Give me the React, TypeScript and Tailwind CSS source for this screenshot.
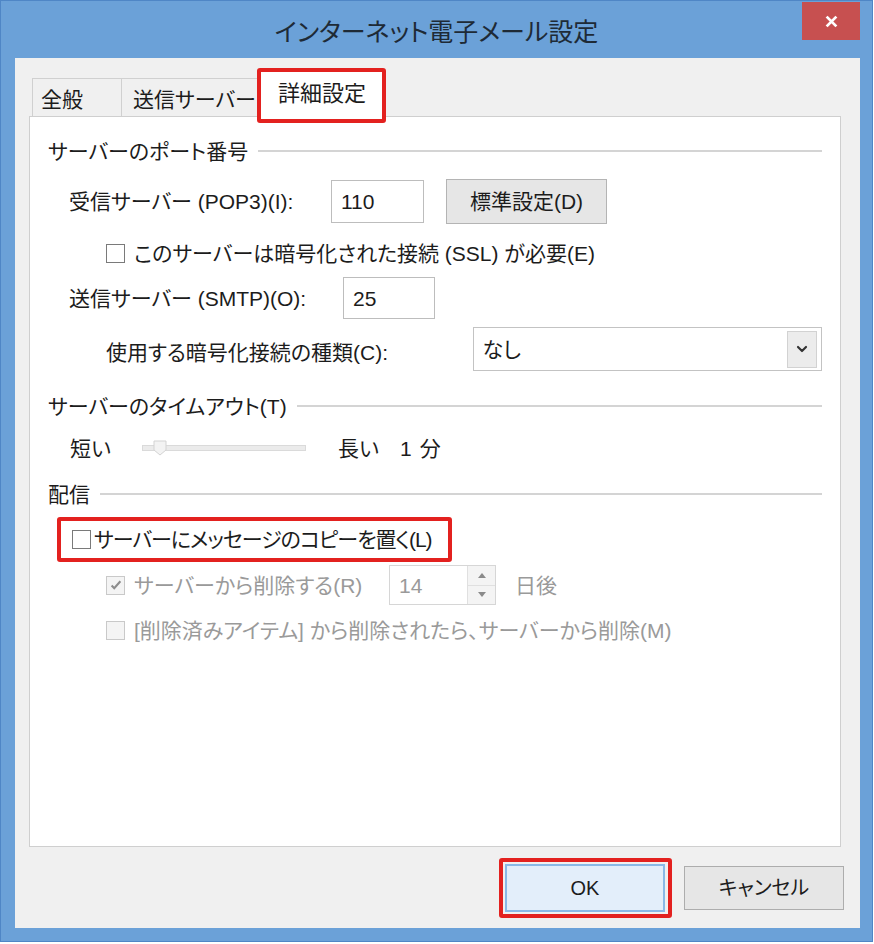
import { ChevronDown } from "lucide-react";

const font = "font-['Liberation_Sans','Noto_Sans_CJK_JP',sans-serif] [font-feature-settings:'palt']";

function Check({ checked = false, disabled = false }: { checked?: boolean; disabled?: boolean }) {
  return (
    <span
      className={`flex h-[19px] w-[19px] shrink-0 items-center justify-center border ${
        disabled ? "border-[#c9c9c9] bg-[#f4f4f4]" : "border-[#7a7a7a] bg-white"
      }`}
    >
      {checked && (
        <svg viewBox="0 0 16 16" className="h-[14px] w-[14px]">
          <path d="M3 8.5l3 3.2 7-8" fill="none" stroke="#8d8d8d" strokeWidth="2.4" />
        </svg>
      )}
    </span>
  );
}

function SectionHeader({ label }: { label: string }) {
  return (
    <div className="flex h-[24px] items-center gap-[10px]">
      <span className="whitespace-nowrap">{label}</span>
      <span className="h-[2px] flex-1 bg-[#d4d4d4]" />
    </div>
  );
}

function RedBox({ className }: { className: string }) {
  return <span className={`pointer-events-none absolute rounded-[3px] border-4 border-[#e3211f] ${className}`} />;
}

export default function App() {
  return (
    <div className={`h-[944px] w-[874px] bg-white text-[21px] leading-none text-[#1c1c1c] ${font}`}>
      <div className="flex h-[942px] w-[873px] flex-col border border-[#4f86c6] bg-[#6ba1d8]">
        {/* title bar */}
        <div className="relative flex h-[57px] shrink-0 items-center justify-center pt-[5px]">
          <span className="text-[25px] text-[#1e2a36]">インターネット電子メール設定</span>
          <button className="absolute right-[12px] top-[1px] flex h-[38px] w-[58px] items-center justify-center bg-[#c75050]">
            <svg viewBox="0 0 12 12" className="h-[13px] w-[13px]">
              <path d="M1.5 1.5l9 9M10.5 1.5l-9 9" stroke="white" strokeWidth="2.6" />
            </svg>
          </button>
        </div>

        {/* client */}
        <div className="ml-[14px] flex h-[870px] w-[845px] flex-col bg-[#f0f0f0] pt-[13px]">
          {/* tabs */}
          <div className="relative z-10 -mb-px flex h-[46px] items-end pl-[17px]">
            <div className="mb-px flex h-[38px] w-[89px] items-center border-l border-t border-[#d0d0d0] bg-[#f0f0f0] pl-[8px] pt-[3px]">
              全般
            </div>
            <div className="mb-px flex h-[38px] w-[138px] items-center overflow-hidden whitespace-nowrap border-l border-t border-[#d0d0d0] bg-[#f0f0f0] pl-[11px] pt-[3px]">
              送信サーバー
            </div>
            <div className="relative flex h-[46px] w-[126px] items-center justify-center border-x border-t border-[#d0d0d0] bg-white pb-[2px]">
              <span className="text-[22px]">詳細設定</span>
              <RedBox className="-bottom-[6px] -left-[3px] -right-[2px] -top-[4px]" />
            </div>
          </div>

          {/* panel */}
          <div className="ml-[14px] flex h-[731px] w-[812px] flex-col border border-[#cfcfcf] bg-white px-[18px] pt-[22px]">
            <SectionHeader label="サーバーのポート番号" />

            <div className="mt-[16px] flex items-center pl-[21px]">
              <span className="w-[262px] whitespace-nowrap">受信サーバー (POP3)(I):</span>
              <div className="flex h-[43px] w-[93px] items-center border border-[#bdbdbd] pl-[9px]">110</div>
              <button className="ml-[22px] flex h-[45px] w-[161px] items-center justify-center border border-[#b4b4b4] bg-[#e6e6e6]">
                標準設定(D)
              </button>
            </div>

            <div className="mt-[18px] flex h-[22px] items-center gap-[9px] pl-[58px]">
              <Check />
              <span className="whitespace-nowrap">このサーバーは暗号化された接続 (SSL) が必要(E)</span>
            </div>

            <div className="mt-[13px] flex items-center pl-[21px]">
              <span className="w-[274px] whitespace-nowrap">送信サーバー (SMTP)(O):</span>
              <div className="flex h-[42px] w-[92px] items-center border border-[#bdbdbd] pl-[9px]">25</div>
            </div>

            <div className="mt-[8px] flex items-center pl-[58px]">
              <span className="w-[369px] whitespace-nowrap pt-[6px]">使用する暗号化接続の種類(C):</span>
              <div className="flex h-[44px] w-[350px] items-center justify-between border border-[#c3c3c3] pl-[8px] pr-[4px]">
                <span>なし</span>
                <span className="flex h-[37px] w-[30px] items-center justify-center border border-[#d2d2d2] bg-[#ececec]">
                  <ChevronDown className="h-[16px] w-[16px] text-[#333]" strokeWidth={3.2} />
                </span>
              </div>
            </div>

            <div className="mt-[23px]">
              <SectionHeader label="サーバーのタイムアウト(T)" />
            </div>

            <div className="mt-[18px] flex h-[24px] items-center pl-[22px]">
              <span className="w-[72px]">短い</span>
              <div className="relative h-[6px] w-[164px] border border-[#dadada] bg-[#ebebeb]">
                <svg viewBox="0 0 14 16" className="absolute -top-[6px] left-[10px] h-[16px] w-[14px]">
                  <path d="M1 1h12v9l-6 5-6-5z" fill="#f3f3f3" stroke="#d3d3d3" />
                </svg>
              </div>
              <span className="ml-[32px] w-[62px]">長い</span>
              <span>1</span>
              <span className="ml-[8px]">分</span>
            </div>

            <div className="mt-[22px]">
              <SectionHeader label="配信" />
            </div>

            <div className="relative ml-[9px] mt-[11px] flex h-[45px] w-[395px] items-center gap-[3px] pl-[15px]">
              <Check />
              <span className="whitespace-nowrap tracking-[-1px]">サーバーにメッセージのコピーを置く(L)</span>
              <RedBox className="inset-0" />
            </div>

            <div className="mt-[3px] flex h-[40px] items-center pl-[58px] text-[#9a9a9a]">
              <Check checked disabled />
              <span className="ml-[9px] w-[255px] whitespace-nowrap">サーバーから削除する(R)</span>
              <div className="flex h-[40px] w-[107px] items-center justify-between border border-[#d6d6d6] pl-[9px]">
                <span>14</span>
                <span className="flex h-full w-[28px] flex-col border-l border-[#e0e0e0]">
                  <span className="flex flex-1 items-center justify-center border-b border-[#e0e0e0] bg-[#f4f4f4]">
                    <svg viewBox="0 0 8 5" className="h-[5px] w-[8px]"><path d="M0 5L4 0l4 5z" fill="#8a8a8a" /></svg>
                  </span>
                  <span className="flex flex-1 items-center justify-center bg-[#f4f4f4]">
                    <svg viewBox="0 0 8 5" className="h-[5px] w-[8px]"><path d="M0 0l4 5 4-5z" fill="#8a8a8a" /></svg>
                  </span>
                </span>
              </div>
              <span className="ml-[19px]">日後</span>
            </div>

            <div className="mt-[13px] flex h-[24px] items-center pl-[58px] text-[#9a9a9a]">
              <Check disabled />
              <span className="ml-[9px] whitespace-nowrap">[削除済みアイテム] から削除されたら、サーバーから削除(M)</span>
            </div>
          </div>

          {/* buttons */}
          <div className="mt-[17px] flex h-[48px] items-center justify-end gap-[19px] pr-[16px]">
            <div className="relative">
              <button className="flex h-[48px] w-[160px] items-center justify-center border-2 border-[#8ab8e6] bg-[#e3eefa] text-[20px]">
                OK
              </button>
              <RedBox className="-bottom-[6px] -left-[6px] -right-[7px] -top-[6px]" />
            </div>
            <button className="flex h-[44px] w-[160px] items-center justify-center border border-[#adadad] bg-[#e6e6e6] text-[20px]">
              キャンセル
            </button>
          </div>
        </div>
      </div>
    </div>
  );
}
